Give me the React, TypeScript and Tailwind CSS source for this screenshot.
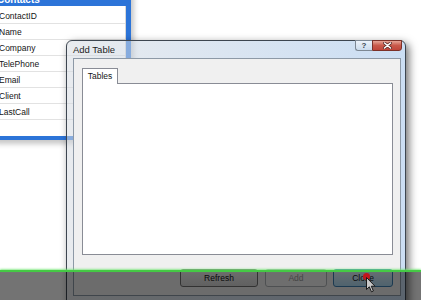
import React from 'react';

const fields = ['ContactID', 'Name', 'Company', 'TelePhone', 'Email', 'Client', 'LastCall'];

const App = () => {
  return (
    <div className="relative w-[421px] h-[300px] overflow-hidden bg-white font-['Liberation_Sans',Arial,sans-serif] text-[8.5px] text-[#151515]">
      {/* table shape on the designer surface */}
      <div className="absolute left-[-8px] top-[-10px] w-[139px] h-[150px] flex flex-col border-x-[5px] border-b-[4px] border-[#2c74d8] bg-white shadow-[3px_4px_5px_rgba(0,0,0,0.22)]">
        <div className="h-[16px] shrink-0 bg-[#2c74d8] pt-[4px] text-[10px] leading-[12px] font-bold text-white">Contacts</div>
        <ul className="pt-[2px] border-r border-[#d8d8d8] flex-1">
          {fields.map((f) => (
            <li key={f} className="h-[16px] leading-[16px] pl-[2px] border-b border-[#e2e2e2]">
              {f}
            </li>
          ))}
        </ul>
      </div>

      {/* Add Table dialog */}
      <div className="absolute left-[66px] top-[40px] w-[340px] h-[265px] flex flex-col rounded-t-[6px] border border-[#3d4650] bg-[linear-gradient(90deg,rgba(214,219,225,0.55),rgba(168,200,236,0.6))] shadow-[3px_3px_9px_rgba(0,0,0,0.55)]">
        <div className="h-[17px] shrink-0 flex items-start">
          <span className="pl-[6px] text-[9.5px] leading-[17px] text-[#1e1e1e]">Add Table</span>
          <div className="ml-auto mr-[3px] -mt-px flex">
            <div className="w-[17px] h-[11px] flex items-center justify-center rounded-bl-[3px] border border-r-0 border-[#7d8894] bg-[linear-gradient(180deg,rgba(255,255,255,0.6),rgba(200,215,230,0.5))] text-[8px] font-bold leading-none text-[#3b4450]">
              ?
            </div>
            <div className="w-[30px] h-[11px] flex items-center justify-center rounded-br-[3px] border border-[#7c3128] bg-[linear-gradient(180deg,#e7a596,#c9594a_50%,#c0463a)]">
              <svg width="9" height="7" viewBox="0 0 9 7">
                <path d="M1.5 1 L7.5 6 M7.5 1 L1.5 6" stroke="#5a2a25" strokeWidth="3" strokeLinecap="round" />
                <path d="M1.5 1 L7.5 6 M7.5 1 L1.5 6" stroke="#ffffff" strokeWidth="1.6" strokeLinecap="round" />
              </svg>
            </div>
          </div>
        </div>

        <div className="flex-1 ml-[6px] mr-[4px] mb-[8px] flex flex-col border border-[#8d99a6] bg-[#f0f0f0] pl-[8px] pr-[7px] pt-[9px]">
          <div className="relative z-10 -mb-px w-[36px] h-[16px] border border-b-0 border-[#898c95] bg-white text-center leading-[15px]">
            Tables
          </div>
          <div className="h-[172px] border border-[#898c95] bg-white" />
          <div className="mt-[14px] flex justify-end">
            <button className="w-[78px] h-[18px] rounded-[3px] border border-[#707070] bg-gradient-to-b from-[#f4f4f4] to-[#d6d6d6] leading-[16px] text-[#151515]">
              Refresh
            </button>
            <button className="ml-[7px] w-[62px] h-[18px] rounded-[3px] border border-[#adb2b5] bg-[#f4f4f4] leading-[16px] text-[#9a9a9a]">
              Add
            </button>
            <button className="ml-[6px] w-[60px] h-[18px] rounded-[3px] border border-[#3c7fb1] bg-gradient-to-b from-[#eaf6fd] to-[#b0dbf3] leading-[16px] text-[#151515]">
              Close
            </button>
          </div>
        </div>
      </div>

      {/* video dimming band and marker line */}
      <div className="absolute left-0 right-0 top-[272px] bottom-0 bg-black/55" />
      <div className="absolute left-0 right-0 top-[270px] h-[2px] bg-[#45c945] shadow-[0_-1px_2px_rgba(110,230,110,0.8)]" />

      {/* click marker + cursor */}
      <div className="absolute left-[363px] top-[273px] w-[7px] h-[7px] rounded-full bg-[#c2161c]" />
      <svg className="absolute left-[366px] top-[277px]" width="10" height="16" viewBox="0 0 10 16">
        <path d="M0.5 0.5 L0.5 12.5 L3.3 9.8 L5.5 14.8 L7.4 14 L5.3 9.2 L9 9.2 Z" fill="#c9c9c9" stroke="#1a1a1a" strokeWidth="1" strokeLinejoin="round" />
      </svg>
    </div>
  );
};

export default App;
